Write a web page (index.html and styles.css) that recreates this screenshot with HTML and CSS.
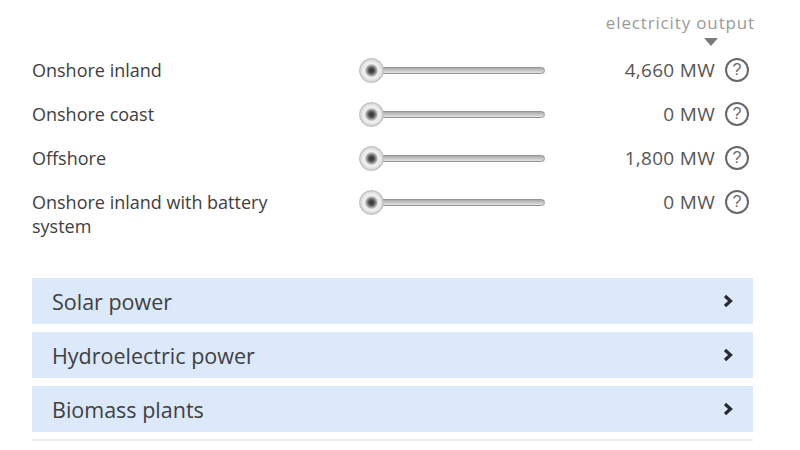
FILE: index.html
```html
<!DOCTYPE html>
<html>
<head>
<meta charset="utf-8">
<link rel="stylesheet" href="styles.css">
</head>
<body>
<div class="page">
  <div class="header">
    <span class="header-label">electricity output</span>
    <span class="caret"></span>
  </div>
  <div class="rows">
    <div class="row">
      <div class="label">Onshore inland</div>
      <div class="slider"><span class="knob"></span><span class="track"></span></div>
      <div class="value">4,660 MW</div>
      <span class="help">?</span>
    </div>
    <div class="row">
      <div class="label">Onshore coast</div>
      <div class="slider"><span class="knob"></span><span class="track"></span></div>
      <div class="value">0 MW</div>
      <span class="help">?</span>
    </div>
    <div class="row">
      <div class="label">Offshore</div>
      <div class="slider"><span class="knob"></span><span class="track"></span></div>
      <div class="value">1,800 MW</div>
      <span class="help">?</span>
    </div>
    <div class="row">
      <div class="label">Onshore inland with battery system</div>
      <div class="slider"><span class="knob"></span><span class="track"></span></div>
      <div class="value">0 MW</div>
      <span class="help">?</span>
    </div>
  </div>
  <div class="panels">
    <div class="panel"><span>Solar power</span><svg class="chev" width="10" height="14" viewBox="0 0 10 14"><path d="M2 2 L7.5 7 L2 12" fill="none" stroke="#262a31" stroke-width="3.2"/></svg></div>
    <div class="panel"><span>Hydroelectric power</span><svg class="chev" width="10" height="14" viewBox="0 0 10 14"><path d="M2 2 L7.5 7 L2 12" fill="none" stroke="#262a31" stroke-width="3.2"/></svg></div>
    <div class="panel"><span>Biomass plants</span><svg class="chev" width="10" height="14" viewBox="0 0 10 14"><path d="M2 2 L7.5 7 L2 12" fill="none" stroke="#262a31" stroke-width="3.2"/></svg></div>
  </div>
</div>
</body>
</html>
```
FILE: styles.css
```css
html, body {
  margin: 0;
  padding: 0;
  background: #ffffff;
}
body {
  font-family: "Open Sans", "Noto Sans", sans-serif;
  color: #444;
}
.page {
  width: 721px;
  padding: 12px 0 0 32px;
}
.header {
  display: flex;
  flex-direction: column;
  align-items: flex-end;
  height: 36px;
  margin-right: -2px;
}
.header-label {
  font-size: 17px;
  line-height: 22px;
  letter-spacing: 0.85px;
  color: #9a9a9a;
}
.caret {
  width: 0;
  height: 0;
  border-left: 7px solid transparent;
  border-right: 7px solid transparent;
  border-top: 8px solid #7a7a7a;
  margin: 4px 37px 0 0;
}
.rows {
  display: flex;
  flex-direction: column;
  gap: 20px;
  margin-top: 10px;
}
.row {
  display: flex;
  align-items: flex-start;
}
.label {
  width: 260px;
  font-size: 18px;
  line-height: 24px;
  color: #3e3e3e;
}
.slider {
  margin-left: 68px;
  width: 185px;
  height: 24px;
  display: flex;
  align-items: center;
  position: relative;
}
.knob {
  position: absolute;
  left: -1px;
  top: 0;
  width: 25px;
  height: 25px;
  border-radius: 50%;
  box-sizing: border-box;
  border: 1px solid #bdbdbd;
  background: radial-gradient(circle at 50% 50%, #333 0, #4a4a4a 2.5px, #8f8f8f 4.5px, #f2f2f2 7px, #e6e6e6 9.5px, #c8c8c8 12px);
  z-index: 1;
}
.track {
  margin-left: 16px;
  flex: 1;
  height: 7px;
  box-sizing: border-box;
  border: 1px solid #959595;
  border-radius: 4px;
  background: linear-gradient(#aaaaaa, #e2e2e2);
}
.value {
  flex: 1;
  text-align: right;
  font-size: 19px;
  line-height: 24px;
  letter-spacing: 0.3px;
  color: #555;
}
.help {
  margin-left: 10px;
  margin-top: 0;
  width: 24px;
  height: 24px;
  box-sizing: border-box;
  border: 2px solid #686868;
  border-radius: 50%;
  font-family: "Liberation Sans", Arial, sans-serif;
  font-size: 16px;
  line-height: 20px;
  text-align: center;
  color: #686868;
  flex: none;
  margin-right: 4px;
}
.panels {
  margin-top: 40px;
  display: flex;
  flex-direction: column;
  gap: 8px;
  padding-bottom: 7px;
  border-bottom: 2px solid #eaeef2;
}
.panel {
  height: 46px;
  background: #dbe9fb;
  display: flex;
  align-items: center;
  justify-content: space-between;
  padding: 0 20px 0 20px;
  font-size: 21.5px;
  color: #404040;
}
.chev {
  display: block;
}
```
